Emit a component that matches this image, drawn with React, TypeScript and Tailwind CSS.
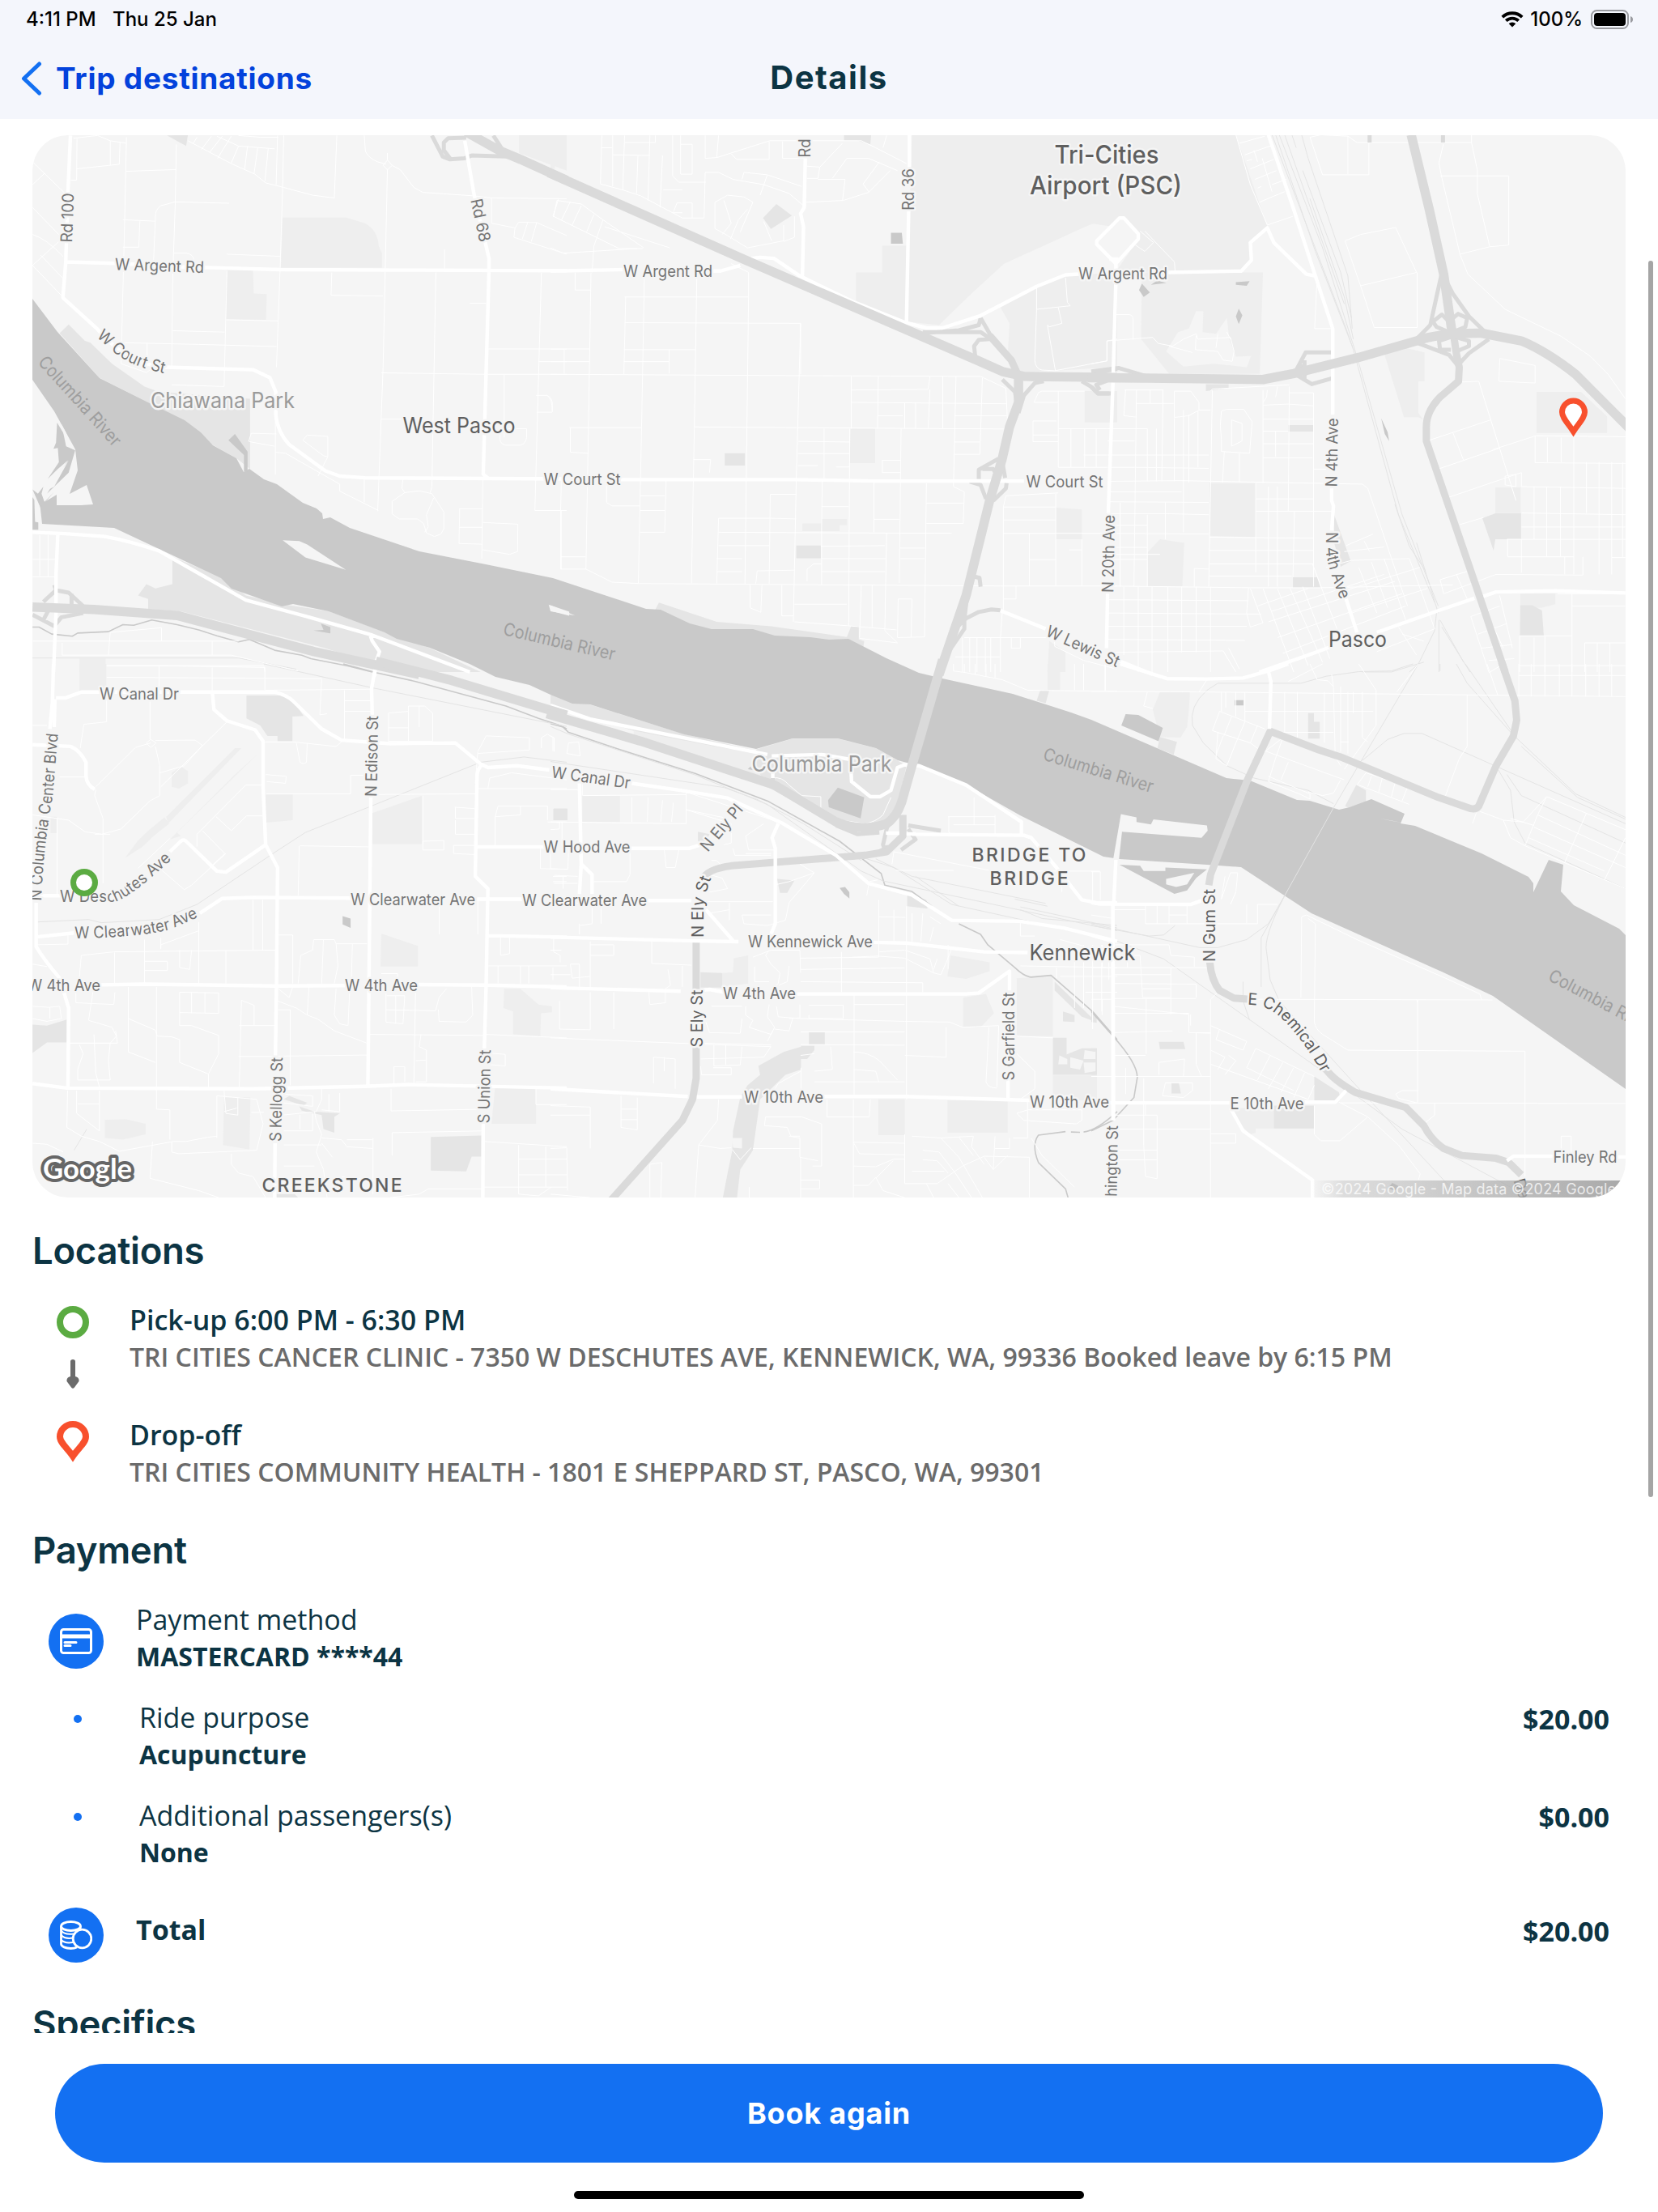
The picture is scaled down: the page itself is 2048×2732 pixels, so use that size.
import type { ReactNode } from 'react'

interface Tile {
  x: number
  y: number
  light: string
  green: string
  land: string
  water: string
  creek: string
  rail: string
  minor: string
  primary: string
  ramp: string
  arterial: string
  highway: string
}

interface MapLabel {
  text: string
  x: number
  y: number
  rotate?: number
  size?: number
  length: number
  color?: string
  halo?: string
  weight?: number
}

interface CurvedLabel {
  id: string
  text: string
  d: string
  length: number
  color?: string
}

const RIVER =
  'M40 369L71 410L123 467L183 497L228 519L248 534L263 550L292 566L301 583L308 579L326 592L342 598L374 621L391 628L398 634L399 641L408 639L432 652L518 681L600 697L683 714L798 752L816 753L852 770L879 777L930 777L957 785L1001 787L1024 790L1048 789L1095 813L1135 831L1164 838L1251 857L1323 880L1348 889L1515 961L1544 964L1602 988L1618 989L1654 1000L1667 997L1694 987L1735 1005L1730 1017L1748 1020L1830 1054L1888 1083L1894 1091L1894 1102L1913 1062L1931 1068L1928 1101L1944 1118L2000 1147L2008 1155V1345L1844 1230L1785 1202L1678 1154L1620 1128L1533 1071L1491 1068L1383 1061L1363 1058L1260 1007L1207 977L1171 961L1131 945L1109 939L1082 924L1035 912L979 912L934 925L845 907L729 870L707 869L680 858L654 846L612 836L580 820L531 800L490 789L475 781L451 772L406 755L362 746L348 749L286 727L273 714L141 652L52 647L48 611L55 620L70 611V624L100 624L115 623L107 599L86 610L96 581L93 555L67 508L40 469Z'

const TILES: Tile[] = [
  {
    x: 0,
    y: 150,
    light:
      'M782 274L958 274L1010 290Q1045 310 1048 355L1057 375L1057 417L777 417ZM628 423L700 423L702 490L738 492L736 565L625 563ZM1436 38L1568 38L1568 140L1436 90ZM220 1530H292V1568H220Z',
    green:
      'M190 578L235 625L250 630L310 690L400 755L440 770L692 790L692 990L655 960L590 922L410 800L275 730L165 603ZM462 40L520 38L515 70ZM477 1240L630 1305L680 1350L800 1378L910 1395L1065 1455L1190 1500L1330 1568L1100 1568L900 1500L500 1395L410 1388L410 1360L382 1350L405 1318L430 1330L477 1318Z',
    land: 'M782 1193L828 1195L850 1205L957 1277L845 1242ZM1523 1378L1575 1396V1408L1528 1395ZM190 965L160 1005L132 1050L150 1040ZM170 862L182 885L205 935L183 925Z',
    water:
      'M650 890L685 940L685 998L675 998L675 950L632 908ZM888 1430L914 1440V1458L867 1450L895 1448ZM158 858L180 895L183 922L208 937L190 1000L130 1060L188 965L160 990L132 1018L163 970L160 930L148 932L155 915ZM90 1048L105 1060L120 1040L115 1060L123 1084L150 1055L112 1100ZM90 1070L95 1078L97 1140L106 1142V1163H90Z',
    creek:
      'M90 1440L108 1440L143 1460L200 1466L215 1457L300 1453L340 1433L370 1435L420 1420L490 1433L550 1448L600 1465L660 1482L690 1475L760 1506L835 1520L860 1530L960 1550L1030 1568',
    rail: 'M90 1528H660L820 1560',
    minor:
      'M90 115L180 205M90 180L123 148M90 245L175 335M90 322Q130 335 175 385M90 410L165 340M90 410L174 500M112 380L175 448M203 48L270 40L305 55L350 62M213 50L212 167H196M212 135L330 122L332 60M305 55V125M350 45L345 280L335 690L405 715L440 690M349 142L487 137M488 65L485 230L478 440L475 700M340 280L430 284M387 284L384 358H340M634 233L485 229L445 240Q428 252 430 275L425 395M480 375H515Q535 378 537 395M628 378L775 384M520 55L575 85L640 120L705 150L735 175L785 188L865 210L925 218L932 40M545 45L535 62M585 42L557 80M615 42L580 88M640 42L602 105M660 70L640 118M685 70L677 135M713 75L703 148M742 78L733 170M768 40L764 180M600 42L660 70L760 78M785 40L782 190L775 420L765 700M660 40L720 45H770M1008 40L1011 85Q1020 105 1045 115L1068 122M1072 90V110M1072 135L1060 700L1045 1110M1060 125L1072 110L1085 125L1072 138ZM1085 125L1108 138L1145 188L1170 202L1312 212L1360 218L1568 220M1230 365V420M1206 430L1195 1040M918 430L916 495L1060 497M1300 518H1345M627 565L770 568M478 596L622 600M628 425L620 755M330 630L550 635L765 641M407 632V700M475 750L620 755M1055 716L1340 720H1568M1350 648H1568M1055 848H1110M1360 220V290L1425 303L1435 287L1485 288L1568 325M1425 303L1422 330L1568 378M1460 288L1445 335M1485 288L1470 342M1530 270L1545 222M1498 430L1480 1108H1568M1490 684H1568M1395 720V900M1483 780L1515 780Q1528 788 1528 800V828H1485M1383 875V905Q1385 920 1400 922H1440Q1455 918 1457 900V875ZM688 912L695 888L765 890M690 912L760 925M762 840V1005M762 942L790 945L940 1033V1053L1047 1108M838 908L850 893L907 897V955L895 952L838 908M907 955L880 1010M1008 1018V1085M1115 1018L1112 1045L1120 1057L1160 1052L1195 1060L1228 1112V1160L1220 1175L1202 1182L1180 1172L1172 1145L1155 1132H1105L1085 1118V1082L1120 1057M1200 1072L1180 1120L1185 1155L1175 1170M1195 1040L1190 1058M1336 1020L1333 1245M1270 1103H1335M1272 1103L1270 1202L1335 1204M1270 1156H1335M1336 1142L1433 1147L1432 1225L1410 1233L1336 1220M1553 1108V1275M110 1178V1295M133 1178V1295M90 1247H155M90 1297H155M172 1485V1520H640L825 1565M300 1520L305 1455L447 1442V1480M90 1480H660M295 1550H730L733 1568M440 1552V1568M587 1480V1520',
    primary:
      'M195 40L188 200L182 400L174 502L270 592Q350 690 455 700L700 707L747 730L763 770V835Q768 885 800 920L900 995L940 1010L1010 1015L1568 1018M182 400L320 404L500 414L775 422L1568 425M1286 55L1312 210L1353 390V425L1337 1005L1350 1015M90 1170L180 1174L290 1182Q360 1195 440 1223L680 1363L860 1413L1030 1463L1300 1568M1025 1465L1030 1480L1050 1510L1042 1535M1038 1560L1036 1580M160 1175L155 1290V1400L148 1568',
    ramp: 'M1195 40L1225 100L1245 108L1285 105L1305 97L1400 100L1440 108M1245 105L1228 82L1228 60L1240 48L1290 46M1365 40L1390 80M150 1320L155 1335L190 1342L230 1380M198 1345V1378M155 1335L120 1368M90 1405L150 1437L170 1412L230 1400M120 1420L135 1390',
    arterial: '',
    highway: 'M1290 30L1380 82L1440 108L1568 168M90 1383L260 1390L490 1407L870 1510L1160 1575',
  },
  {
    x: 680,
    y: 150,
    light:
      'M1000 38H1568V290L1515 285L1480 300L1255 405L1165 490L1075 580L985 570L993 300ZM918 354H985V430H918ZM845 430L985 430V570L845 510ZM1345 470L1425 437L1568 434V700L1300 715L1265 670L1270 575L1245 530ZM830 875H898V973H828ZM697 1145H750V1132H820V1150H800V1167H697ZM1398 1100L1470 1105V1190H1398ZM1478 768H1568V857H1478ZM0 38H12V135H0ZM1380 1480L1425 1510V1568H1375Z',
    green:
      'M588 275L625 235L668 268L610 306ZM812 38H887L885 65L850 55H812ZM482 945H538V980H482ZM680 1208H748V1244H680ZM300 1370L460 1425L610 1438L820 1468L832 1437H853V1475L868 1480L865 1500L800 1490L445 1460L290 1390Z',
    land: 'M-5 1376L68 1407L0 1395Z',
    water: 'M942 317H972L975 348H942Z',
    creek: '',
    rail: '',
    minor:
      'M142 40L138 178L200 195L250 212L365 275H425L428 145H465L505 165L590 180L660 205L700 240M140 75H170M172 40V185M205 40L200 195M172 95L275 97M242 97L238 205M275 40L270 225M205 60H290V40M310 97L303 245M360 40V150H392V65H360M338 40V155L355 173H430M312 195H365M428 40V105L460 103L545 75L607 55H860L900 75L985 120M465 40L460 103M500 92L515 108H605V57M642 57V105H705M705 127L745 130L808 62M745 130L740 162H710M780 162L820 105H880L960 140M808 225L815 165H740M708 230L810 225L880 202L940 140M910 115L865 178L882 202M930 40L920 75M530 165L535 145L600 152L695 185M455 230L490 210L535 215L560 230M455 230V305L490 325L545 360L645 340V295M480 225L500 290L475 322M545 250L520 280L498 335M600 152L580 210M560 230L525 315M590 285L612 340M675 270V330L645 342M340 258L350 232H392V275M338 260H365M18 225L85 235L145 280L258 360M8 270L190 362H255M55 228L30 282M85 240L60 295M120 265L100 315M145 280L120 355L115 430M35 375L240 362M150 300L330 360M18 225L8 272M0 360L35 375M112 430L105 870L98 1275L170 1312L245 1316L1245 1323M68 430V480H112M260 430L252 870L243 1316M205 500H548V430L500 405M205 573L692 575V720M208 500L203 720M405 430L398 870L390 1316M548 500L538 1318M692 575L680 1020L672 1425M0 648H108M38 650V718M0 684H108M203 650H400M328 650V718M203 684H328M0 720L690 724L1190 726L1260 760L1265 870M-10 780Q5 790 5 825M52 872H252M55 872V942L105 945M398 870L1265 876M0 1108H28L30 1020M28 1108V1240H98M28 1240V1275H98M155 1020V1085L170 1095H248M320 1020L316 1170H248M248 1066H316M248 1108H316M395 963H443L440 1000M832 726V875M832 765L1045 763L1050 726M832 800L1262 804M907 726L905 875M980 800V875M905 838H975M1010 800V875M1050 763L1045 875M1085 726V875M1122 726L1115 1040L1145 1055L1142 1145H1040M1118 838H1262M1195 730L1188 948H1118M1118 913H1188M685 911L828 913M685 946H828M757 875V1020M685 980H740M790 984H828M918 965H970M918 965V1000H970M970 875L965 1315M828 875L825 1436M895 1024V1170M752 1020L750 1165V1320M608 1062H680M608 1062L605 1316M465 1130H608L680 1132M465 1130L460 1316M465 1170L1110 1173M465 1208H605M460 1245H530M460 1282H530M750 1097H825M895 1133H965M748 1210L925 1208M750 1245H928M750 1282H925M930 1173L925 1450L960 1485L855 1472M568 1316L572 1280L675 1278M710 1310V1275L728 1260H750M552 1320V1385L582 1398L585 1320M640 1320V1408H672M675 1375H820M675 1425L820 1436L958 1448M860 1320L855 1470M890 1320V1440M1040 1030L1035 1468L960 1470L962 1360H1000L998 1468M1040 1087H1142M968 1215H1035M968 1245H1035M1345 475V535L1438 525L1430 515L1425 445M1345 535L1340 680Q1342 705 1360 708L1395 710L1540 682V625L1568 620M1405 530L1415 575L1380 585L1375 580L1397 710M1338 800L1350 772L1360 768H1478M1338 800H1405M1405 768V985M1335 853H1400M1335 853V912H1405M1335 893H1405M1478 875V985M1405 875H1540M1440 875V985M1510 875V985M1405 985H1540M1475 950H1540M1405 1058L1260 1066L1253 1098V1390M1253 1098H1398M1253 1135H1398M1253 1173H1540M1325 1173V1323M1325 1248H1398M1398 1060V1323M1470 1190V1323M1435 1220H1470M1245 1323H1568M1253 1360H1288V1323M1250 1395L1245 1470M1145 1470H1395V1495L1475 1535L1568 1560M1140 1470V1568M1160 1470V1568M1180 1470V1568M1203 1470V1568M1218 1470V1568M1245 1470V1568M1120 1525H1245M1275 1470V1500H1300V1470',
    primary:
      'M0 426L200 422M447 426L470 426L525 410M555 390L580 387L618 390L690 440L840 515L980 572L1040 588L1085 588L1190 553L1345 470L1425 437L1470 434M705 105L702 245L692 262L700 300L697 440M993 38V130M991 255L985 570M195 1020L680 1020L900 1024L1310 1024M1245 1393L1370 1445',
    ramp: 'M1030 603L1130 595L1185 580L1190 560M1030 600L1190 600L1222 622M1190 560L1225 622M1175 668L1172 640L1185 622L1215 620M1250 735L1285 770L1290 800M1365 740L1340 745L1310 780L1295 830M1470 740L1495 755L1515 775L1558 775M1480 728L1540 710L1568 705M1520 765L1510 750L1540 738M1240 960L1185 992L1185 1018M1195 990L1225 990L1240 1015M1250 970L1258 1015M1160 1026L1190 1035L1205 1075M1262 1030L1260 1045L1225 1080M1160 1293L1187 1300L1190 1325M1155 1330L1145 1420L1145 1445L1095 1520M1105 1460L1150 1415L1185 1397L1220 1390L1245 1392',
    arterial: 'M1215 610L1275 680L1297 730',
    highway:
      'M-5 146L540 395L1180 680L1250 712L1310 726L1480 728L1568 729M1295 725L1295 800L1270 870L1250 960L1215 1080L1150 1350L1075 1575',
  },
  {
    x: 1348,
    y: 150,
    light:
      'M-5 38H400L487 300L440 345L443 395L415 428H68L130 335V320L85 275L60 300L30 295L-5 290ZM140 430H475L466 718H215L138 620ZM810 660L870 645L922 658V740H905V830L918 850L905 842H865ZM1232 770H1355L1427 840V887H1232ZM-5 434H60L52 700H-5ZM0 770H50V857H0ZM327 1030H456V1184L327 1180ZM1118 1042H1188V1115H1118ZM190 1190L257 1200L252 1325H156V1227ZM1187 1345H1284V1375L1245 1385H1187Z',
    green:
      'M317 748H380V760L317 768ZM545 865H615V883H545ZM672 1120L718 1252L690 1268L672 1200ZM558 1298H625L634 1328H558ZM1082 1130L1118 1116H1189V1190H1118L1113 1222ZM1187 1378H1220L1247 1393L1252 1465H1186Z',
    land: 'M240 600L270 590L290 540H310L308 600L345 605L375 560L382 620L400 670L442 668L430 700L340 690L255 698L207 655Z',
    water:
      'M140 462L162 487L145 500L132 480ZM165 465L182 453L208 460ZM400 458L438 455L430 468L400 465ZM408 533L418 552L408 577L400 555ZM802 845L820 885L824 910L812 890Z',
    creek: '',
    rail: 'M500 38L705 590L725 650L850 1120L950 1370M510 38L620 370L722 640M520 38L640 360L735 670L860 1120L960 1380M535 38L700 520M555 38L567 75M582 38L600 105L710 440L722 590M585 140L690 430L720 560M605 220L700 500L725 620M840 1090L880 1210L925 1280M900 1200L930 1300L960 1400M962 1420V1568M955 1400L950 1450L905 1545L880 1568M965 1420L1030 1540M970 1440L1048 1568M750 1568L830 1568L920 1540',
    minor:
      'M400 38L440 180L487 295L558 270M410 62L480 42M425 95L500 68M430 112L445 108M440 135L505 108M453 165L512 140M460 190L470 185M465 230L535 200M450 82L460 115M473 105L500 200M500 180L540 165M605 45L635 38L710 42L735 60H1052V38M605 45L640 152H768V62M710 42V150M974 65L962 118L968 152L1020 378L1102 357L1155 352V155H966M1052 60L1068 138V205L1102 355M702 340L745 322L842 302L900 430L745 468M745 468L783 587H902V430M702 340L745 468M1020 378L1042 435L1145 535L1300 612L1380 668L1430 720L1478 790M625 440L618 590H665M135 312L172 345L148 370L122 352M148 312L230 400L232 428M68 550H105Q116 552 116 565V622M43 625L170 615L185 632L225 640L255 620L290 605L295 620L385 615M290 610L288 650L350 655L365 680L390 683L395 655L385 615M215 640L280 658M350 605L345 645M375 600L385 620M43 625V682L0 690M1130 675L1228 695V745L1128 740ZM1025 742L1072 740L1175 1080M935 908L1105 850M960 990L1130 930M1000 885L1030 965M990 1070L1190 1000V1040M1145 1035V1010L1175 1005V1040ZM1020 1148L1085 1128M92 765H200M95 765L90 838L125 842M125 765L118 1325M125 803H228M163 765V803M198 765V803L195 1025M230 768H275L298 800V822L270 838L230 843ZM297 822H330M330 768L335 762L548 750M335 765L325 1325M475 765V1030M487 765L485 785L475 800M475 808L545 805L615 810M515 755L510 785M548 755L545 1110M548 773H615V1325M360 825L375 820H422L445 855L438 945L360 940V905L357 865ZM388 850L417 860V910L388 925ZM368 940L363 1028M410 945V1028M155 875V1025M180 875V1025M230 845V1025M255 822V1170M270 835V1028M295 825V985M45 875H155M45 910H120M45 950H325M45 985H120L325 988M45 1025L245 1023L750 1033L765 1045L875 1380M475 848H615M475 882H545M475 918H615M475 958H612M510 882V955M615 990H650M615 990V960M45 1055H250M45 1083L325 1085M45 1117H205L325 1120M45 1150H155M45 1173L325 1175M80 1085V1325M45 1213H155M45 1233H190M45 1247H155M155 1120V1325M205 1085V1190M455 1110H665M455 1030V1285M490 1040V1325M515 1040V1325M562 1110L558 1298M455 1075H615M327 1184L615 1187M327 1222H615M327 1260H615M285 1325V1273L325 1275M327 1295H555M45 1323L440 1328H635L1000 1320M45 1362L435 1365M45 1400L470 1403M45 1438H430M45 1475L425 1478M45 1512L365 1508M90 1325V1520M130 1325V1568M168 1325V1568M212 1325V1568M250 1325V1512M290 1325V1512M330 1325V1568M365 1508L400 1568M380 1500L410 1560M435 1328L430 1400L440 1440L475 1428L440 1330M475 1330L560 1568M515 1330L600 1550M550 1330L640 1540M585 1325L660 1530M612 1260L700 1500M460 1380L600 1330M500 1395L810 1290M490 1425L840 1310M515 1470L860 1345M530 1515L870 1380M650 1270L720 1250L880 1245M705 1208L780 1175M700 1225L810 1212M755 1195L770 1225M740 1270L790 1400M775 1255L820 1385M810 1245L870 1420M880 1245L950 1445L790 1510M690 1340L910 1270M720 1400L930 1330M850 1440L900 1520M860 1460L920 1480M1230 895L1478 898M1228 895V972L1478 974M1262 900V970M1300 900V970M1335 900V970M1230 895L1110 935M1335 970V1290M1405 970V1290M1440 970V1290M1470 970V1240M1190 1040L1478 1045M1225 1040V1190M1260 1040V1240M1298 1040V1240M1370 970V1115M1190 1115L1478 1120M1150 1190H1478M1152 1190V1240H1335M1190 1190V1285M1440 1242H1478M1190 1155H1478M1118 1290L1360 1292V1240M965 1305L1060 1275M975 1345L1120 1290M965 1305L975 1345M1010 1290L1040 1360M1040 1280L1055 1310M1310 1240V1290M1050 1410L1130 1380M1050 1410L1100 1568M1070 1460L1150 1430M1080 1500L1165 1490M1095 1400L1140 1500M1130 1350L1165 1500M1100 1535L1170 1530M1185 1465V1568M1185 1465H1330M1225 1470V1568M1255 1465V1568M1330 1345V1568M1365 1485H1478M1365 1485V1568M1400 1485V1568M1435 1485V1568M1185 1550H1478M1290 1345H1478M1330 1380H1478',
    primary:
      'M490 38L560 250L620 440L668 590V835M665 1045V1080L670 1095L665 1165M705 1360L735 1455M78 275L15 340V350L68 405L130 335V320L90 275ZM50 392H75M68 405V432M210 430L415 426L443 395L440 345L487 303L505 345L595 435L620 440M68 455L60 740L47 1115M45 1345L42 1500M465 1568L600 1520L660 1497M790 1455L955 1395L1060 1358M1085 1352L1120 1340L1285 1337L1478 1343M75 1535L170 1575',
    ramp: 'M968 440L955 500L938 580L895 625M985 460L1000 490L1045 555L1090 600L1130 620M900 630L990 665L1018 700M1018 690L1045 660L1100 620M990 600L955 585L945 570L970 550L985 565M1000 600L1035 585L1040 560L1015 548L995 565M1000 612L962 625L965 650L995 650M1010 615L1045 625V640L1010 655M0 712L75 702L150 725M50 775H20L0 755M565 712L593 658H665M565 720L610 748L665 732M590 680V735M575 690L600 720M770 38V60M973 38V60',
    arterial: 'M1000 590L1010 660L1018 700L1016 740L965 785Q927 825 927 870V910L1075 1355L1145 1568',
    highway:
      'M-10 730L150 731L475 735L560 718L740 672L900 625Q960 602 1080 603L1190 625Q1260 655 1340 720L1490 875M885 38L935 250L975 435L998 600',
  },
  {
    x: 0,
    y: 820,
    light:
      'M220 0H294V80H220ZM735 372H810V445L735 452ZM1030 425L1168 375V513H1030ZM1055 768L1156 803V862H1053ZM1395 925L1440 925L1490 970L1527 975V992L1497 995L1495 1060L1420 1055V990L1393 980ZM1370 1205H1483V1310H1360ZM290 1298L350 1297L403 1310V1340L340 1355L290 1350ZM620 1235H693L690 1383L617 1370ZM346 553L380 505L410 475L455 437L468 455L425 490L395 520ZM475 310L500 292L520 305V340L495 355L475 350ZM140 435H157V482H140ZM470 500L645 320L715 255L680 290L490 480L500 490ZM460 435L650 240L668 240L465 455Z',
    green:
      'M682 90H800L840 148L809 150V220H768V205H740L720 175L682 155ZM90 1027L130 1030L185 1013V1078H130L90 1108ZM1192 1347L1332 1343V1403H1305L1290 1445L1192 1443ZM785 1240L800 1230L850 1250L840 1258ZM828 1260L870 1275L940 1280L925 1290V1335L895 1325L890 1285L835 1272ZM765 1510H815L825 1520H765ZM1532 412H1568V445H1532Z',
    land: '',
    water: 'M948 718L970 725V752L948 742Z',
    creek: 'M950 0L1040 25L1150 50L1400 120L1490 155L1550 175L1568 185',
    rail: 'M730 0L1030 68L1568 178M102 735L245 728L280 737L440 728L545 685L770 530L845 480L1330 280L1450 265L1568 280M240 1325L205 1385',
    minor:
      'M295 5H435L733 10V75M295 38L890 42L885 145L905 142M440 10V80M587 10V80M733 75L1030 72M953 75V215L930 235L810 222L733 222M953 105H1028M953 135H1028M1075 220V140L1130 135V120H1175L1197 140V220H1075M1130 135V220M1075 182H1130M1160 120V180M295 80V165L232 172L222 240M415 100V215M417 225L375 238L265 350M405 225L417 215L432 225L417 238ZM430 218L540 217L560 232L510 290L443 310M430 235L442 290V375L415 390L335 470L282 485M265 357L262 375L285 440V625M165 322H237M90 430L190 445L235 478L282 485M158 440V660M90 175H130M262 485H305M628 165L445 350M728 345H680L545 485V520M560 475L622 540L580 580M598 435L640 475L682 433H728M445 585L510 643L530 630L625 540M382 582L470 497M735 315L792 320L790 340L738 335M820 225L830 280Q840 287 848 280L850 225M737 370H970M970 370V317H1025M1025 372L1318 370M1170 375V513M1258 408L1313 412M1260 408V440H1313M1260 485H1313M1260 445V485M1170 505L1228 503V530H1170ZM1255 517H1313M1255 517V540L1313 543M830 518L1020 521M828 518L825 660M1315 340L1322 250L1345 205L1465 210V245L1322 255M1350 355L1355 325L1415 310L1568 330M1498 240V210L1515 200L1530 210V248M1322 355H1568M1370 517V435L1378 405L1515 405V445M1370 435L1440 430V405M1515 450H1568M1495 523V583L1568 585M1555 450V520M1530 605H1568M1530 620H1568M700 672V815M727 672V815M770 772H810V910M550 760L445 800V810M550 735V910M445 780V812M400 785V910M225 830L315 820L765 815M100 800L188 798V770M225 830L218 910M90 855L130 862M317 822V910M497 815V865L525 870L530 815M400 847H463V873H400ZM625 815V910M825 910L832 830L865 815L868 785H925L930 797H1015M895 785L890 910M975 797L972 910M930 797L935 860L925 910M1055 882H1100V910M1215 690V770M1322 670V770M1385 775V830L1410 825V780M1532 778V820L1550 830V850M1350 860H1568M1378 860V910M1440 860V910M1463 860V910M1530 865V900M210 935V965L315 970L318 935M258 930L245 1015L310 1035L322 1060L305 1080H188M355 920V1010L430 1043L435 1060L475 1062L497 1070V1135L577 1168L605 1110V1058L530 1030H497V935L605 937V995L497 993M530 935V995M567 935V995M355 1010V1105L430 1135M433 920V1205M668 958L703 972V1030M668 958L662 1205M662 1030H760M660 1118H760M768 960L820 980L850 1000L880 1012L925 1045L1015 1080M770 985H803V1200M770 1117L1015 1114M855 920L850 1000M930 925L925 1000L940 1025L963 1030L968 920M770 925L800 950L810 920M1068 920V1020L1115 1025L1120 945M1070 945H1120M1095 945V1025M1068 985L1205 988L1215 950L1235 925M1150 925L1145 1200M1305 920L1308 1000L1290 1020L1215 1018L1213 985M1020 1055L1340 1058M1340 1055L1568 1065M1165 1055L1160 1090L1180 1100V1190H1150M1150 1130L1180 1128M1090 1200V1147H1120V1190M1350 1108L1398 1112V1145L1345 1140M188 1080H325L320 1045M260 1055L262 1100L265 1165L275 1205M220 1085L230 1110L215 1155V1185H305L300 1130L305 1080M577 1168V1205M90 975L135 978L165 975L170 1010L130 1018L90 1010M138 978V1010M187 1215L185 1320L225 1345L275 1360L330 1388L480 1360H515L575 1348L600 1345M212 1215V1280L275 1330V1215M215 1253H275M433 1210V1268L470 1270V1355M600 1230V1350M600 1230L710 1240L728 1310L710 1385L495 1395L475 1390V1360M620 1215L625 1280L658 1285V1235M655 1265L620 1275M695 1277H730M90 1365L130 1368L175 1390M422 1360L415 1465L550 1500L605 1520M640 1395V1425L660 1450L700 1460L735 1520M780 1225L865 1230V1260L785 1250M780 1285L828 1280L875 1275L890 1240V1210M830 1285V1325M865 1280V1330H785M870 1275L875 1300L890 1340L875 1390L895 1440L905 1520M910 1225V1275M940 1222V1275L890 1270M785 1370H890M890 1350L945 1355L960 1375L1030 1380M785 1430H870M1032 1350V1510M960 1355H1030M920 1405L890 1365M1082 1210V1273L1350 1268M1085 1400V1335L1335 1330M1340 1360L1568 1375M1435 1370V1510L1490 1515L1525 1490M1435 1410H1568M1435 1455H1568M1335 1490H1568M1080 1520L1160 1510L1185 1495H1335M1483 1210V1255H1568M945 1460L1035 1470M1510 1375V1490',
    primary:
      'M148 0L145 110L138 185M152 100L150 180M155 97L180 97L225 80H760Q795 90 810 105L890 185L945 217L1080 227L1260 225L1330 285L1350 295L1430 290L1520 302M588 85L592 130L628 162L706 188L728 220V350L735 515L768 580L765 920L762 1115M761 1365L760 1520M90 230L195 235Q220 245 238 280V320Q240 345 262 357M90 660H170M470 535L500 505Q508 498 515 505L600 590L625 593L735 515M97 778L205 766M553 710L615 668L700 665L970 667M1320 670H1445M100 680V805Q120 840 165 895L190 980L188 1208M275 914L400 912L760 917L955 916M1155 913L1350 915L1568 920M90 1195L185 1208L700 1210L1010 1203L1130 1198L1568 1208M1038 15L1028 70L1030 145M1026 380L1018 1200M1335 285Q1320 300 1320 320L1315 605L1350 640L1345 920L1340 1095M1337 1310L1336 1520M1320 521H1505M1350 774L1568 778',
    ramp: '',
    arterial: '',
    highway: 'M1040 -8L1250 47L1568 146',
  },
  {
    x: 680,
    y: 820,
    light:
      'M88 375H192V450H88ZM475 880L505 878L507 838L547 830V910L475 920ZM1107 830L1215 850V875L1150 897L1098 890ZM1142 950L1205 940L1227 995L1190 1035H1142ZM1290 895L1390 890V1060H1290ZM907 1240H980V1342H907ZM1098 1243H1265V1335H1098ZM1375 0H1410V75H1375ZM1390 1172H1512V1243H1390ZM230 190L600 260L590 330L230 215Z',
    green:
      'M0 85L60 108L110 116L370 200L560 245L480 240L230 190L0 120ZM570 243L670 213H795L900 240L960 275L985 290L960 400L940 440L900 465L800 460L740 430L600 350L578 310L560 300ZM987 655L1040 672L1043 697L987 690ZM627 612L675 617L655 652H635ZM415 878L475 880V922H415ZM715 1048H759V1084H715ZM693 1088H730V1100L710 1125H693ZM645 1105L693 1090V1155L650 1170L580 1240L560 1385L525 1440L515 1530H475L490 1450L503 1385L505 1330L525 1235L545 1200L580 1170L575 1145ZM8 412H47V445H8ZM408 478L440 485L430 510L408 505ZM1390 1065H1428V1112L1470 1095H1512V1170H1390ZM1395 905L1510 1020L1470 1005L1395 930ZM1355 75H1380L1370 112L1345 105ZM1418 990L1450 1000V1020L1418 1018Z',
    land: 'M503 1350H530V1380L505 1378ZM1408 1115L1430 1125V1140H1405ZM1438 1120L1475 1130L1465 1155L1438 1150ZM1478 1100L1508 1105V1125H1475ZM1475 1135H1508V1160L1478 1165Z',
    water:
      'M795 352L868 380L858 440L770 408L768 388ZM800 638L815 635L827 650V668L812 655ZM546 300L553 292L560 302Z',
    creek:
      'M0 170L35 180L50 195L180 240L400 312L600 390L800 505L915 597L925 630L1000 648L1055 690M1130 740L1190 770L1210 800L1285 865Q1310 890 1330 892L1385 887L1500 990L1568 1070M1568 1275Q1510 1330 1475 1333M1465 1334L1440 1333M1425 1332L1350 1342Q1330 1370 1350 1420L1425 1495L1432 1520',
    rail: 'M0 178L50 200L400 316L600 400L860 590L920 618L1568 760M0 278L480 352L570 385L700 455L860 560M900 555L1000 605L1370 682M830 540L950 580L1110 685L1400 750M1010 605L1130 690M1300 700L1360 725L1568 745M1300 692L1568 752M1285 670L1375 690',
    minor:
      'M0 205L10 210V250M45 255L50 225L78 222L82 262L45 255M0 358H80M90 375L375 372V455L0 450M88 340V375M225 380V450M270 380L268 450M310 388L305 450M340 395L335 450M375 415L500 455V510L480 515M375 365V415L490 440M375 365L640 453M0 450L25 452V470L0 472M0 528V583L48 585L50 528M220 530V600L210 620H120M315 530L320 580H345L355 530M10 602L75 605M10 625H75M35 605V640M445 560H460L475 577M590 455L540 490L548 530H620M505 525L510 545H610M540 540L610 540M440 600L475 610L490 640L440 650M618 630L660 620L730 595L690 570M730 595L660 680L650 730L600 745L535 740L530 715H610M430 677H615M495 680V730M440 710L495 700M20 682L140 680V740M80 740V770M115 680V740L82 745M0 815H30M110 790V925M110 800H175V830H110M55 855H80V920M55 855L60 895L110 890M0 885H55M280 790V853L390 858M325 870L332 915L318 925V965L275 970L272 935M25 960V1040L110 1042V935M175 935V1040M365 860V920M560 835L610 815H690L692 880M605 815L595 830L610 855L635 880L630 910L620 920M565 862V905H605M660 860L655 905L632 915M805 820V935M908 672V835L690 838M692 870L980 866M692 905L1030 908V935M908 720L982 722M875 660L882 620L905 615M985 690V1240M950 700V790M1000 710V790M1030 710L1025 790M1060 750L1050 790M945 570L950 535L1225 590L1520 590M955 588H1115M1100 435H1230M1102 435V480L1115 487M1172 380V458M1230 430V485M1115 458H1230M1050 720L1080 740M835 835L905 832L980 838L1060 880L1080 885L1095 850L1110 810M910 820L980 815L1050 840L1060 880M1100 800V870M615 325Q640 320 660 345L695 375L748 378V410L770 440L870 455Q900 450 920 430L942 380M1060 870L1070 840M715 972H810V1010H715V1000M690 970L690 1008L660 1010M540 975V1000L560 1015L550 1035L610 1055L620 1035L600 1005L605 970M625 975L630 1005L690 1010M620 1040L660 1045L670 1010M840 940V1230M840 970H980M690 1010L980 1018L1105 1020L1140 1035L1240 1030M692 1048H980M692 1084L980 1086M600 1075L615 1045M430 1020L440 1050L525 1052L530 1010M445 975H530M415 1080L610 1085M415 1083L610 1090L590 1120L415 1125M452 1085V1145L525 1142L530 1090M485 1085V1142M415 1145L418 1170H500V1150H450M0 1065L400 1082M285 1195V1120L345 1125V1210M315 1120V1160M693 1150V1240M692 1160L630 1195L605 1235M775 1090L780 1155L730 1160M730 1190H980M838 1105Q880 1105 910 1130L960 1185M838 1155L900 1160L908 1190M692 1115L730 1110M980 1115L1095 1120V1035M1213 1035L1205 1190Q1210 1208 1235 1208M1240 1030L1235 1205M1290 1110L1340 1160V1210L1300 1240M1290 1060L1390 1065M0 1258L110 1262V1380M0 1285H110M195 1230V1320L240 1327V1235M195 1268H240M195 1298H240M465 1240L462 1300L410 1370L470 1380L500 1378M410 1370L400 1520M0 1380L45 1378L47 1500M275 1520V1425L308 1420L305 1520M0 1510L110 1520M595 1290H695L750 1310V1430H725M595 1290L592 1315L655 1320L665 1345H690M660 1345L690 1350V1405L740 1415M765 1240V1290H882L885 1240M560 1380H690M503 1383L525 1412L555 1378M550 1520V1490M692 1405V1520M692 1470H745V1495H692M838 1240V1520M838 1362L980 1365M838 1362L855 1395L980 1398M838 1430L900 1432L950 1410H980M838 1485H880L900 1462L920 1500L980 1520M900 1465L948 1415M980 1340V1480H1070L1140 1430L1200 1402L1325 1405V1520M1000 1345L1080 1350L1130 1405L1195 1520M1030 1385L1075 1390L1120 1450L1165 1520M1030 1412L1070 1415L1100 1450M1000 1445H1090M1080 1350L1170 1345L1165 1375L1200 1425M1130 1348L1170 1400M1230 1345L1225 1440M1230 1380H1270V1350M1200 1405L1225 1440L1265 1400M1100 1480L1130 1520M1040 1480L1060 1520M1320 1245V1350L1280 1350M1290 1280L1320 1270H1470V1300L1455 1310L1310 1300ZM1330 1350L1360 1400L1450 1490M1115 0V20L1150 25L1250 45L1320 75L1568 78M1145 0V25M1175 0V30M1205 0V35M1230 0V40M1450 0V75M1475 0V75M1535 0V75M1300 860L1568 865M1300 735V775H1340M1410 785L1568 830M1450 835V980M1475 800V980M1500 800V1040M1525 800V990M1545 800V900M1410 890H1568M1400 865V895M1480 935H1568M1415 600V650M1500 590V680M1430 595L1425 620',
    primary:
      'M0 118L110 157L600 258M612 262L750 258L830 272L833 335L885 378H912L942 360L960 295L980 287L1020 290L1150 345L1303 450V487M1000 485L1310 488L1330 495L1400 580L1470 672L1510 680H1568M615 300V325M225 340L360 360L490 382L640 453L790 545L880 625L1000 658L1110 730L1300 733L1420 752L1568 790M630 455L613 495L622 525V740L610 770M222 525H385L415 515M80 340L85 570L80 655M85 570L115 600V655M265 674H390M430 700L505 788M0 778L400 789L520 791M890 793L985 795L1200 820L1320 822M0 922L360 932M415 930L440 927L480 935M680 940L1150 940L1185 937L1270 875V930M1266 1185V1240M0 1210L380 1232M405 1233H530M757 1232L980 1232L1330 1243M1556 680L1558 1300M928 482H965M985 484H1010',
    ramp: 'M930 470L920 515L930 540M990 470L1010 500L970 530M990 460L1080 475M790 460L850 485L910 480M945 430L930 470M615 325V355M900 540L935 520',
    arterial:
      'M975 430V490L930 535L870 545L500 575Q430 585 420 615M403 793V926M403 1092V1180L393 1240L365 1300L165 1530',
    highway: 'M-10 142L250 220L620 345L790 450Q860 480 930 455Q965 430 978 370L1000 290L1085 -12',
  },
  {
    x: 1348,
    y: 820,
    light:
      'M190 80H273L270 130L265 180L247 210L190 208L170 130ZM390 1265H505V1323H455V1335L440 1340L410 1310Z',
    green:
      'M190 208L237 222L228 258L183 240ZM733 345L760 360V395L720 412L702 405ZM600 140H616V165H632V213H600ZM617 1175L685 1220L690 1240L660 1250H617ZM505 1258H616V1323H505ZM187 1076H255L260 1097H190ZM222 1193H242L248 1223H222ZM0 1095H15V1170H0ZM0 985L15 1000V1022L0 1020Z',
    land: 'M82 428L125 437V450L165 457L172 443L320 460L322 475L305 495L85 478L76 562L60 560ZM798 440L860 452L830 447ZM207 612L285 595L265 628L235 635L207 628Z',
    water:
      'M95 143L130 145L198 182L186 220L83 175ZM397 103H421V118H397ZM833 1478L850 1487L840 1500L820 1493ZM78 572L135 575L145 590H205V580L320 585L290 610L265 645L230 655Z',
    creek: 'M0 990L60 1060Q130 1140 127 1180L118 1235L60 1300L0 1330',
    rail: 'M905 0L670 410L535 660L490 740L430 785L350 808L300 808L0 740M535 660Q475 780 485 820L495 900L520 960L750 1220L1020 1520M470 920V780L535 660M0 770L60 785L200 840L640 1160L860 1325L1160 1490M890 0L830 20L740 22L650 35L580 55H350L320 75Q270 120 280 175L310 225L375 290L450 325L600 360L670 398M750 275L820 215L865 198H915L1478 455M1010 0L1040 55L1165 200L1340 370L1478 437M1190 235L1345 380L1478 442M1125 300L1160 360L1170 450L1200 510L1478 640M1150 315L1190 375L1478 510M420 905V960L438 1015M0 745L160 775L200 772L232 745M965 0V20M1035 0L1165 195',
    minor:
      'M0 78L320 80L1478 93M38 0V78M155 80L145 120L170 127M320 45L298 80M360 80V135M400 80V150M372 80V125M425 80V165M425 135H780M535 80V195M570 80V220M645 80V225M670 65L675 265L690 290M690 65V250M710 80V255M545 50L640 0M605 0L625 45L655 48L670 65L665 30M740 0L788 75V175L760 215L700 300M500 195H670M725 80V140M750 80V210L765 222M690 222H712M355 135L480 185M355 135L335 190L440 225L460 240L700 330M388 150L367 205M425 165L400 225M460 175L440 225M365 205L345 260M400 225L375 290M350 195L345 270L375 290M490 335L510 268L530 210M490 335L580 372L605 385V370L490 320M545 280L525 330M530 210L480 250M690 330L670 368L640 375L600 365M845 80L905 0M1040 88V235L1018 270L980 375M1100 25L1140 0M1095 0L1125 90M1183 0V93M1183 33H1478M1217 0V93M1255 0V93M1295 0V93M1330 0V93M1368 0V93M1405 0V93M1440 0V93M735 345L760 310L875 350L860 390M740 345L880 400M775 320L765 350M805 325L795 365M840 340L830 380M1065 425L1055 455M1075 420L1140 445L1160 495L1200 518L1478 640M1140 445L1195 450L1260 378L1478 472M1260 378L1235 430L1200 518M1370 425L1310 565M1235 430L1478 545M1225 465L1478 580M1210 495L1420 590M1478 495L1420 615M1160 440L1225 460M0 592H25V672M150 685V740H460V685H515M182 685V740M215 685V740M265 685V740M215 715H265M430 685V738M60 700H150M360 670L385 595H405L400 650L385 685M360 670L370 605M60 800H215L220 830L285 835V862M0 865H330M60 830H135L142 950H220V865M60 885H220M60 910L290 912V950M142 925H220M60 953H290M60 975L270 998V1050L330 1052M60 995H270M0 715L60 725M152 955V1110M60 1050L225 1045M60 1115H150M220 950V998M330 955V1520M330 955L350 935M330 1050L290 1050V1140L305 1175M0 1175H330M145 1180V1370L150 1460L182 1466V1285H60M150 1250V1285M60 1325H330M60 1385H182M60 1412H182M330 1338H400V1365H330M330 1030L430 1075L420 1100L345 1070L355 1040M330 1100L370 1120L350 1155M330 1140L600 1240L617 1200M455 1095L617 1175M455 1095L430 1150M495 1115L460 1185M530 1135L490 1210M560 1150L525 1220M590 1165L560 1235M380 1115L400 1130L370 1170M430 1150L560 1215M197 1230L205 1193H280V1215L255 1235ZM187 1170V1135L258 1125L255 1175M275 1030V998M580 950L582 720L595 715L735 785L980 895L1075 940L1080 957M600 725L620 740L617 1020Q620 1040 640 1055L710 1100L1200 1103V1520M440 955L1110 957M903 957V1250M900 955L903 965M690 1250L1478 1252M905 1215H860L842 1225L850 1237L900 1250M950 1252V1285L920 1310M685 1248L765 1290L850 1370L910 1452L905 1470M765 1290L688 1358H635L617 1340V1258M1300 1395V1345H1328V1395M1172 1405V1402M30 800V865M0 835H60M100 800V865M0 955H60M30 955V1000M95 1150V1225',
    primary:
      'M80 0L210 42L320 43L420 40L490 20L545 0M490 20L497 50L493 185M0 680L25 684L275 685L310 672M60 685L60 1300M0 772L60 790M68 558L62 684M50 1250H385M590 1248H675L705 1215M385 1265L420 1330L612 1470V1520M1150 1415L1168 1402H1280M1457 1404H1490',
    ramp: '',
    arterial:
      'M1135 -5L1172 105L1177 160L1168 205L1120 290L1072 405Q1065 415 1050 412L960 380L690 265L630 245L495 192L430 335L330 600L325 630M328 850Q332 900 355 930L395 952L440 955M650 1155Q670 1185 730 1220L870 1263L920 1315Q940 1355 975 1380L1025 1400L1120 1408L1155 1420L1190 1455',
    highway: '',
  },
]

const ROAD = '#757575'
const WATER_TEXT = '#9e9e9e'
const PLACE = '#5f5f5f'

const LABELS: MapLabel[] = [
  { text: 'Rd 100', x: 83, y: 269, rotate: -88, length: 61 },
  { text: 'Rd 68', x: 594, y: 272, rotate: 78, length: 54 },
  { text: 'Rd', x: 994, y: 183, rotate: -90, length: 23 },
  { text: 'Rd 36', x: 1122, y: 234, rotate: -90, length: 52 },
  { text: 'W Argent Rd', x: 197, y: 328, rotate: 2, length: 110 },
  { text: 'W Argent Rd', x: 825, y: 335, length: 110 },
  { text: 'W Argent Rd', x: 1387, y: 338, length: 110 },
  { text: 'W Court St', x: 719, y: 592, length: 95 },
  { text: 'W Court St', x: 1315, y: 595, length: 95 },
  { text: 'N 20th Ave', x: 1369, y: 684, rotate: -89, length: 96 },
  { text: 'N 4th Ave', x: 1645, y: 559, rotate: -89, length: 85 },
  { text: 'W Lewis St', x: 1338, y: 798, rotate: 24, length: 97 },
  { text: 'W Canal Dr', x: 172, y: 857, length: 98 },
  { text: 'W Canal Dr', x: 730, y: 960, rotate: 8, length: 98 },
  { text: 'N Edison St', x: 459, y: 934, rotate: -89, length: 100 },
  { text: 'W Clearwater Ave', x: 510, y: 1111, length: 154 },
  { text: 'W Clearwater Ave', x: 722, y: 1112, length: 154 },
  { text: 'W Hood Ave', x: 725, y: 1046, length: 107 },
  { text: 'N Ely Pl', x: 891, y: 1022, rotate: -50, length: 69 },
  { text: 'S Ely St', x: 861, y: 1258, rotate: -90, length: 71, color: PLACE },
  { text: 'W 4th Ave', x: 79, y: 1217, length: 90 },
  { text: 'W 4th Ave', x: 471, y: 1217, length: 90 },
  { text: 'W 4th Ave', x: 938, y: 1227, length: 90 },
  { text: 'W Kennewick Ave', x: 1001, y: 1163, length: 154 },
  { text: 'W 10th Ave', x: 968, y: 1355, length: 98 },
  { text: 'W 10th Ave', x: 1321, y: 1361, length: 98 },
  { text: 'E 10th Ave', x: 1565, y: 1363, length: 91 },
  { text: 'Finley Rd', x: 1958, y: 1429, length: 79 },
  { text: 'S Garfield St', x: 1246, y: 1280, rotate: -90, length: 109 },
  { text: 'hington St', x: 1373, y: 1434, rotate: -89, length: 88 },
  { text: 'S Kellogg St', x: 341, y: 1358, rotate: -89, length: 104 },
  { text: 'S Union St', x: 598, y: 1342, rotate: -89, length: 91 },
  { text: 'N Gum St', x: 1494, y: 1143, rotate: -90, length: 90, color: PLACE },
  { text: 'Da', x: 1880, y: 1468, rotate: 72, length: 25, color: PLACE },
  { text: 'Columbia River', x: 99, y: 495, rotate: 48, size: 22, length: 141, color: WATER_TEXT, halo: 'none' },
  { text: 'Columbia River', x: 691, y: 792, rotate: 13, size: 22, length: 141, color: WATER_TEXT, halo: 'none' },
  { text: 'Columbia River', x: 1357, y: 951, rotate: 17, size: 22, length: 141, color: WATER_TEXT, halo: 'none' },
  { text: 'Columbia River', x: 1977, y: 1236, rotate: 28, size: 22, length: 141, color: WATER_TEXT, halo: 'none' },
  { text: 'Chiawana Park', x: 275, y: 494, size: 27, length: 178, color: '#9a9a9a' },
  { text: 'Columbia Park', x: 1015, y: 943, size: 27, length: 173, color: '#9a9a9a' },
  { text: 'West Pasco', x: 567, y: 525, size: 27, length: 139, color: PLACE },
  { text: 'Pasco', x: 1677, y: 789, size: 27, length: 72, color: PLACE },
  { text: 'Kennewick', x: 1337, y: 1176, size: 27, length: 131, color: PLACE },
  { text: 'Tri-Cities', x: 1367, y: 191, size: 31, length: 129, color: PLACE, weight: 500 },
  { text: 'Airport (PSC)', x: 1366, y: 229, size: 31, length: 188, color: PLACE, weight: 500 },
  { text: 'BRIDGE TO', x: 1271, y: 1056, size: 23, length: 141, color: PLACE, weight: 500 },
  { text: 'BRIDGE', x: 1271, y: 1085, size: 23, length: 97, color: PLACE, weight: 500 },
  { text: 'CREEKSTONE', x: 410, y: 1464, size: 23, length: 173, color: PLACE, weight: 500 },
]

const CURVED_LABELS: CurvedLabel[] = [
  { id: 'court', text: 'W Court St', d: 'M119 416L142 436Q165 455 217 464', length: 97 },
  { id: 'fourth', text: 'N 4th Ave', d: 'M1638 657V682Q1640 702 1660 752', length: 87 },
  { id: 'center', text: 'N Columbia Center Blvd', d: 'M51 1113Q54 1040 65 985L73 890', length: 208 },
  { id: 'deschutes', text: 'W Deschutes Ave', d: 'M74 1114L140 1114Q160 1111 222 1052', length: 156 },
  { id: 'clearwater', text: 'W Clearwater Ave', d: 'M92 1159Q170 1158 210 1148L262 1125', length: 157 },
  { id: 'ely', text: 'N Ely St', d: 'M869 1158V1118Q870 1105 884 1070', length: 75, color: PLACE },
  { id: 'chemical', text: 'E Chemical Dr', d: 'M1541 1241Q1562 1240 1580 1255Q1610 1282 1638 1335', length: 131, color: PLACE },
]

interface LayerProps {
  layer: Exclude<keyof Tile, 'x' | 'y'>
  fill?: string
  stroke?: string
  width?: number
}

// Tile paths are in tile space, 1568 units to 700 x 680 map pixels
function Layer({ layer, fill = 'none', stroke = 'none', width = 0 }: LayerProps) {
  return (
    <g fill={fill} stroke={stroke} strokeWidth={width} strokeLinejoin="round">
      {TILES.filter((tile) => tile[layer] !== '').map((tile) => (
        <path
          key={`${tile.x}-${tile.y}`}
          d={tile[layer]}
          transform={`translate(${tile.x} ${tile.y}) scale(0.44643 0.43367)`}
          vectorEffect="non-scaling-stroke"
        />
      ))}
    </g>
  )
}

function MapView() {
  return (
    <svg
      viewBox="40 167 1968 1312"
      className="block h-[1312px] w-[1968px] rounded-[44px] bg-[#f5f5f5] font-['Inter',sans-serif]"
    >
      <defs>
        <linearGradient id="credit">
          <stop offset="0" stopColor="#b0b0b0" stopOpacity="0" />
          <stop offset="0.1" stopColor="#b0b0b0" stopOpacity="0.35" />
          <stop offset="1" stopColor="#a8a8a8" />
        </linearGradient>
        {CURVED_LABELS.map((label) => (
          <path key={label.id} id={label.id} d={label.d} />
        ))}
      </defs>

      <Layer layer="light" fill="#eeeeee" />
      <Layer layer="green" fill="#e5e5e5" />
      <path d={RIVER} fill="#c9c9c9" />
      <Layer layer="water" fill="#c9c9c9" />
      <Layer layer="land" fill="#f5f5f5" />
      <Layer layer="creek" stroke="#c9c9c9" width={1.6} />
      <Layer layer="rail" stroke="#e4e4e4" width={1} />
      <Layer layer="minor" stroke="#ffffff" width={1} />
      <Layer layer="ramp" stroke="#dadada" width={5} />
      <Layer layer="arterial" stroke="#dadada" width={9} />
      <Layer layer="primary" stroke="#ffffff" width={4.4} />
      <Layer layer="highway" stroke="#dadada" width={11.5} />

      {LABELS.map((label, index) => (
        <text
          key={index}
          x={label.x}
          y={label.y}
          dy="0.36em"
          textAnchor="middle"
          fontSize={label.size ?? 20}
          fontWeight={label.weight ?? 400}
          fill={label.color ?? ROAD}
          stroke={label.halo ?? '#f5f5f5'}
          strokeWidth={5}
          strokeLinejoin="round"
          paintOrder="stroke"
          textLength={label.length}
          lengthAdjust={label.size === 23 ? 'spacing' : 'spacingAndGlyphs'}
          transform={label.rotate ? `rotate(${label.rotate} ${label.x} ${label.y})` : undefined}
        >
          {label.text}
        </text>
      ))}
      {CURVED_LABELS.map((label) => (
        <text
          key={label.id}
          fontSize={20}
          fill={label.color ?? ROAD}
          stroke="#f5f5f5"
          strokeWidth={5}
          strokeLinejoin="round"
          paintOrder="stroke"
        >
          <textPath href={`#${label.id}`} textLength={label.length} lengthAdjust="spacingAndGlyphs">
            {label.text}
          </textPath>
        </text>
      ))}

      <rect x="1621" y="1458" width="387" height="21" fill="url(#credit)" />
      <text x="1632" y="1475" fontSize="18" fill="#ffffff" fillOpacity="0.75" textLength="364">
        ©2024 Google - Map data ©2024 Google
      </text>
      <text
        x="53"
        y="1456"
        fontSize="35"
        fontWeight="700"
        fill="#ffffff"
        stroke="#666666"
        strokeWidth="8"
        strokeLinejoin="round"
        paintOrder="stroke"
        textLength="110"
        lengthAdjust="spacingAndGlyphs"
        className="font-['Lato',sans-serif]"
      >
        Google
      </text>

      <circle cx="104" cy="1090" r="13.5" fill="#ffffff" stroke="#5bab42" strokeWidth="7" />
      <path
        d="M1943.500 533C1937 523 1929.500 516 1929.500 509A14 14 0 0 1 1957.500 509C1957.500 516 1950 523 1943.500 533Z"
        fill="#ffffff"
        stroke="#f8502d"
        strokeWidth="7"
      />
    </svg>
  )
}

function StatusBar() {
  return (
    <div className="flex h-12 items-center justify-between pl-8 pr-[31px] font-['Inter',sans-serif] text-[24px] font-medium text-black">
      <div className="flex">
        <span className="w-[107px] whitespace-nowrap">4:11 PM</span>
        <span className="whitespace-nowrap">Thu 25 Jan</span>
      </div>
      <div className="flex items-center">
        <svg viewBox="0 0 28 20" className="mr-2 h-5 w-7">
          <g fill="none" stroke="#000" strokeWidth="3.800">
            <path d="M1.800 7.200A17.500 17.500 0 0 1 26.200 7.200" />
            <path d="M6.300 11.700A11 11 0 0 1 21.700 11.700" />
          </g>
          <path d="M14 19.500L9.700 15.200A6.200 6.200 0 0 1 18.300 15.200Z" />
        </svg>
        <span className="mr-2.5">100%</span>
        <svg viewBox="0 0 52 24" className="h-6 w-[52px]">
          <rect x="1" y="1" width="45" height="22" rx="6.500" fill="none" stroke="#9a9ba0" strokeWidth="2" />
          <rect x="4" y="4" width="39" height="16" rx="4" />
          <path d="M49 8Q52 9 52 12Q52 15 49 16Z" fill="#9a9ba0" />
        </svg>
      </div>
    </div>
  )
}

function Heading({ className, children }: { className: string; children: ReactNode }) {
  return (
    <h2 className={`h-14 font-['Inter',sans-serif] text-[45.500px] font-semibold leading-[58px] tracking-[-0.3px] ${className}`}>
      {children}
    </h2>
  )
}

function CardIcon() {
  return (
    <span className="flex size-[68px] items-center justify-center rounded-full bg-[#1370f2]">
      <svg viewBox="0 0 40 32" className="h-8 w-10" fill="none" stroke="#fff" strokeLinecap="round">
        <rect x="1.500" y="1.500" width="37" height="29" rx="3" strokeWidth="3" />
        <path d="M2 10H38" strokeWidth="5" strokeLinecap="butt" />
        <path d="M6 17.500H20M6 21.500H13" strokeWidth="3" />
      </svg>
    </span>
  )
}

function CoinsIcon() {
  return (
    <span className="flex size-[68px] items-center justify-center rounded-full bg-[#1370f2]">
      <svg viewBox="0 0 40 36" className="h-9 w-10" fill="none" stroke="#fff" strokeWidth="2.800">
        <ellipse cx="13.500" cy="7" rx="12" ry="5.500" />
        <path d="M1.500 7V29C1.500 32 7 34.500 13.500 34.500Q18 34.500 21 33" />
        <path d="M1.500 12C4 16 10 17.500 17 16.500M1.500 18C5 22 10 22.500 16 21.500M1.500 24C5 27.500 10 28 16 27M25.500 7V12" strokeWidth="2" />
        <circle cx="27.500" cy="22.500" r="11.300" fill="#1370f2" />
      </svg>
    </span>
  )
}

interface PaymentRowProps {
  icon: ReactNode
  label: string
  value: string
  amount?: string
  nested?: boolean
}

function PaymentRow({ icon, label, value, amount, nested }: PaymentRowProps) {
  return (
    <div className="flex h-[92px] text-[34px] leading-[46px]">
      <div className="flex w-[126px] shrink-0 pl-5">{icon}</div>
      <div className={nested ? 'pl-1.5' : 'pl-0.5'}>
        <p>{label}</p>
        <p className="text-[32px] font-bold">{value}</p>
      </div>
      {amount && <p className="ml-auto mr-5 mt-0.5 text-[34px] font-bold">{amount}</p>}
    </div>
  )
}

function Bullet() {
  return <span className="ml-[31px] mt-5 size-2.5 rounded-full bg-[#1370f2]" />
}

export default function App() {
  return (
    <div className="flex h-[2732px] w-[2048px] flex-col bg-white font-['Open_Sans',sans-serif] text-[#0c3443]">
      <header className="h-[147px] shrink-0 bg-[#f4f6fc]">
        <StatusBar />
        <div className="grid h-[98px] grid-cols-3 items-center">
          <button className="flex items-center pl-[26px] font-['Inter',sans-serif] text-[37px] font-bold tracking-[0.75px] text-[#0342dc]">
            <svg viewBox="0 0 26 42" className="mr-[17px] h-[42px] w-[26px]" fill="none" stroke="#1370f2" strokeWidth="5" strokeLinecap="round" strokeLinejoin="round">
              <path d="M22.500 3L3.500 21L22.500 39" />
            </svg>
            <span className="whitespace-nowrap">Trip destinations</span>
          </button>
          <h1 className="-mt-0.5 text-center font-['Inter',sans-serif] text-[40px] font-bold tracking-[1.500px]">Details</h1>
        </div>
      </header>

      <div className="relative h-[2364px] shrink-0 overflow-hidden">
        <main className="px-10 pt-5">
          <MapView />

          <Heading className="mt-[37px]">Locations</Heading>
          <section className="mt-[35px] text-[32px] font-semibold leading-[46px]">
            <div className="flex h-[142px]">
              <div className="flex w-[120px] shrink-0 flex-col items-start pl-[30px] pt-1.5">
                <span className="size-10 rounded-full border-8 border-[#5bab42]" />
                <svg viewBox="0 0 16 36" className="ml-3 mt-[26px] h-9 w-4" fill="#6b6b6b">
                  <path d="M5 2.500Q5 0 8 0Q11 0 11 2.500V21Q16 22 15.500 27L10 34.500Q8 37 6 34.500L0.500 27Q0 22 5 21Z" />
                </svg>
              </div>
              <div>
                <p className="text-[34px]">Pick-up 6:00 PM - 6:30 PM</p>
                <p className="text-[#6b6b6b]">
                  TRI CITIES CANCER CLINIC - 7350 W DESCHUTES AVE, KENNEWICK, WA, 99336 Booked leave by 6:15 PM
                </p>
              </div>
            </div>
            <div className="flex h-[92px]">
              <div className="w-[120px] shrink-0 pl-[30px] pt-1.5">
                <svg viewBox="0 0 40 52" className="h-[52px] w-10" fill="none" stroke="#f8502d" strokeWidth="8">
                  <path d="M20 43.500C13 33 4 27 4 19.500A16 15.500 0 0 1 36 19.500C36 27 27 33 20 43.500Z" />
                </svg>
              </div>
              <div>
                <p className="text-[34px]">Drop-off</p>
                <p className="text-[#6b6b6b]">TRI CITIES COMMUNITY HEALTH - 1801 E SHEPPARD ST, PASCO, WA, 99301</p>
              </div>
            </div>
          </section>

          <Heading className="mt-[45px]">Payment</Heading>
          <section className="mt-[35px] flex flex-col gap-[29px]">
            <PaymentRow icon={<span className="pt-4"><CardIcon /></span>} label="Payment method" value="MASTERCARD ****44" />
            <PaymentRow icon={<Bullet />} label="Ride purpose" value="Acupuncture" amount="$20.00" nested />
            <PaymentRow icon={<Bullet />} label="Additional passengers(s)" value="None" amount="$0.00" nested />
          </section>
          <div className="mt-[45px] flex h-[68px] pl-5 text-[34px] font-bold leading-[54px]">
            <CoinsIcon />
            <p className="ml-10">Total</p>
            <p className="ml-auto mr-5 mt-0.5">$20.00</p>
          </div>

          <Heading className="mt-[47px]">Specifics</Heading>
        </main>
        <div className="absolute right-1.5 top-[175px] h-[1527px] w-1.5 rounded-full bg-[#a5a5a5]" />
      </div>

      <footer className="flex grow flex-col items-center pt-[38px]">
        <button className="h-[122px] w-[1912px] rounded-[61px] bg-[#1370f2] font-['Inter',sans-serif] text-[36px] font-bold tracking-[0.8px] text-white">
          Book again
        </button>
        <div className="mt-[35px] h-2.5 w-[630px] rounded-full bg-black" />
      </footer>
    </div>
  )
}
